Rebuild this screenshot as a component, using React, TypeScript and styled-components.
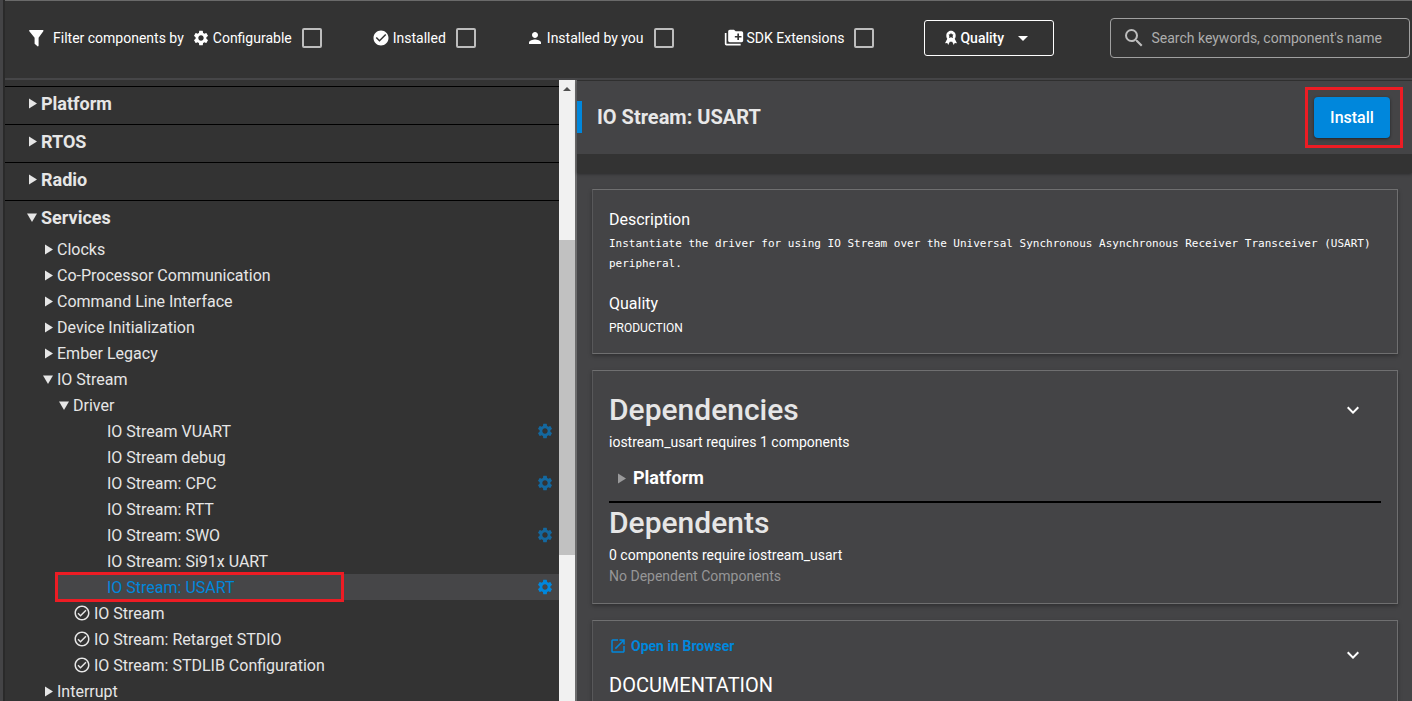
import React from 'react';
import styled, { createGlobalStyle } from 'styled-components';
import {
  MdSettings,
  MdCheckCircle,
  MdPerson,
  MdSearch,
  MdArrowDropDown,
  MdOutlineCheckCircle,
  MdOpenInNew,
  MdExpandMore,
} from 'react-icons/md';

const GlobalStyle = createGlobalStyle`
  * { box-sizing: border-box; }
  body {
    margin: 0;
    background: #333333;
    color: #ffffff;
    font-family: Roboto, sans-serif;
    overflow: hidden;
  }
  h1, h2, h3, p, ul { margin: 0; padding: 0; }
  ul { list-style: none; }
  button, input { font-family: inherit; }
  svg { flex: none; }
`;

const Page = styled.div`
  display: flex;
  flex-direction: column;
  height: 100vh;
  border-left: 3px solid #444446;
  box-shadow: inset 2px 0 0 #2a2a2a;
  padding-left: 2px;
  overflow: hidden;
`;

const Toolbar = styled.header`
  display: flex;
  align-items: center;
  flex: none;
  gap: 50px;
  height: 80px;
  padding: 0 2px 4px 24px;
  border-top: 1px solid #6a6a6a;
  border-bottom: 2px solid #464648;
`;

const FilterGroup = styled.div`
  display: flex;
  align-items: center;
  gap: 8px;
`;

const FilterLabel = styled.span`
  font-size: 14px;
  line-height: 20px;
  white-space: nowrap;
`;

const CheckLabel = styled.label`
  display: flex;
  align-items: center;
  gap: 3px;
  font-size: 14px;
  line-height: 20px;
  white-space: nowrap;
`;

const Checkbox = styled.input`
  appearance: none;
  width: 20px;
  height: 20px;
  margin: 0 0 0 7px;
  border: 2px solid #bdbdbd;
  border-radius: 2px;
`;

const QualityButton = styled.button`
  display: flex;
  align-items: center;
  gap: 3px;
  flex: none;
  width: 130px;
  height: 36px;
  padding: 0 0 0 20px;
  border: 1px solid #ffffff;
  border-radius: 3px;
  background: transparent;
  color: #ffffff;
  font-size: 14px;
  font-weight: 500;
`;

const Caret = styled(MdArrowDropDown)`
  margin-left: 4px;
`;

const SearchField = styled.label`
  display: flex;
  align-items: center;
  flex: 1;
  gap: 5px;
  height: 40px;
  margin-left: 6px;
  padding: 0 11px;
  border: 1px solid #a0a0a0;
  border-radius: 4px;
  color: #bdbdbd;
`;

const SearchInput = styled.input`
  flex: 1;
  min-width: 0;
  padding: 0;
  border: 0;
  outline: 0;
  background: transparent;
  color: #ffffff;
  font-size: 14px;
  &::placeholder { color: #adadad; opacity: 1; }
`;

const Body = styled.main`
  display: flex;
  flex: 1;
  min-height: 0;
`;

const Tree = styled.nav`
  flex: 554 1 0;
  min-width: 0;
  padding-top: 6px;
  overflow: hidden;
  color: #e6e6e6;
`;

const Category = styled.div<{ $open: boolean }>`
  display: flex;
  align-items: center;
  gap: 3px;
  padding: 3px 20px ${(p) => (p.$open ? 6 : 8)}px;
  border-top: 1px solid #000000;
  font-size: 18px;
  font-weight: 700;
`;

const Row = styled.li<{ $indent: number; $selected?: boolean }>`
  position: relative;
  display: flex;
  align-items: center;
  gap: 3px;
  height: 26px;
  margin-left: ${(p) => (p.$selected ? 50 : 0)}px;
  padding: 0 5px 0 ${(p) => (p.$selected ? p.$indent - 50 : p.$indent)}px;
  background: ${(p) => (p.$selected ? '#464648' : 'transparent')};
  color: ${(p) => (p.$selected ? '#0087dc' : 'inherit')};
  font-size: 16px;
`;

const RowLabel = styled.span`
  padding-top: 2px;
  line-height: 24px;
`;

const RowGear = styled(MdSettings)<{ $active?: boolean }>`
  margin-left: auto;
  color: ${(p) => (p.$active ? '#0087dc' : '#14689f')};
`;

const RowHighlight = styled.div`
  position: absolute;
  top: -2px;
  left: 0;
  width: 289px;
  height: 30px;
  border: 3px solid #ed1c24;
`;

const Scrollbar = styled.div`
  display: flex;
  flex-direction: column;
  align-items: center;
  flex: none;
  width: 18px;
  border-right: 2px solid #6c6c6d;
  background: #f1f1f1;
  color: #505050;
`;

const ScrollArrow = styled.div`
  display: flex;
  align-items: center;
  justify-content: center;
  height: 17px;
`;

const ScrollThumb = styled.div`
  width: 100%;
  height: 315px;
  margin-top: 143px;
  background: #c1c1c1;
`;

const Detail = styled.section`
  flex: 835 1 0;
  min-width: 0;
  background: #444446;
  border-top: 1px solid #333333;
`;

const DetailHeader = styled.div`
  display: flex;
  align-items: flex-start;
  height: 92px;
  padding: 16px 22px 0 0;
  border-bottom: 19px solid #333333;
  box-shadow: 0 1px 3px rgba(0, 0, 0, 0.4);
`;

const DetailTitle = styled.h1`
  flex: 1;
  margin-top: 4px;
  padding-left: 15px;
  border-left: 5px solid #0087dc;
  font-size: 20px;
  line-height: 32px;
  font-weight: 700;
  color: #e8e8e8;
`;

const InstallWrap = styled.div`
  position: relative;
`;

const InstallHighlight = styled.div`
  position: absolute;
  inset: -10px -13px -10px -9px;
  border: 3px solid #ed1c24;
  pointer-events: none;
`;

const InstallButton = styled.button`
  display: block;
  width: 76px;
  height: 41px;
  padding: 0;
  border: 0;
  border-radius: 4px;
  background: #0087dc;
  color: #ffffff;
  font-size: 16px;
  font-weight: 500;
  box-shadow: 0 1px 3px rgba(0, 0, 0, 0.5);
`;

const Cards = styled.div`
  display: flex;
  flex-direction: column;
  gap: 16px;
  padding: 16px 14px 0 15px;
`;

const Card = styled.article`
  padding: 16px 16px 15px;
  border: 1px solid #6f6f70;
  border-left-color: #58585a;
  box-shadow: 0 2px 4px rgba(0, 0, 0, 0.3);
`;

const CardSection = styled.div`
  padding: 3px 0;
`;

const FieldTitle = styled.h3`
  font-size: 16px;
  line-height: 28px;
  font-weight: 400;
`;

const Mono = styled.p`
  margin-bottom: 16px;
  font-family: 'DejaVu Sans Mono', monospace;
  font-size: 11px;
  line-height: 20px;
`;

const Production = styled.p`
  font-size: 12px;
  line-height: 20px;
`;

const Heading = styled.h2`
  font-size: 30px;
  line-height: 40px;
  font-weight: 500;
  color: #e6e6e6;
`;

const Note = styled.p<{ $dim?: boolean }>`
  font-size: 14px;
  line-height: ${(p) => (p.$dim ? 18 : 24)}px;
  color: ${(p) => (p.$dim ? '#969697' : '#ffffff')};
`;

const PlatformRow = styled.div`
  display: flex;
  align-items: center;
  gap: 6px;
  height: 49px;
  padding-left: 5px;
  border-bottom: 2px solid #000000;
  font-size: 18px;
  font-weight: 700;
`;

const CardTop = styled.div<{ $align: string }>`
  display: flex;
  align-items: ${(p) => p.$align};
  justify-content: space-between;
  padding-right: 10px;
`;

const Toggle = styled.button`
  display: flex;
  align-items: center;
  justify-content: center;
  width: 36px;
  height: 36px;
  padding: 0;
  border: 0;
  background: transparent;
  color: #ffffff;
`;

const BrowserLink = styled.a`
  display: flex;
  align-items: center;
  gap: 4px;
  color: #0087dc;
  font-size: 14px;
  line-height: 18px;
  font-weight: 700;
  text-decoration: none;
`;

const DocTitle = styled.h2`
  font-size: 20px;
  line-height: 24px;
  font-weight: 400;
`;

const Arrow = ({ open, color = 'currentColor' }: { open?: boolean; color?: string }) => (
  <svg width="13" height="12" viewBox="0 0 13 12" fill={color} aria-hidden="true">
    {open ? <path d="M2 2.500h10l-5 8.500z" /> : <path d="M4 1.500l8 5-8 5z" />}
  </svg>
);

const Funnel = () => (
  <svg width="16" height="18" viewBox="0 0 16 18" fill="#fff" aria-hidden="true">
    <path d="M.8 1h13c.7 0 .9.6.5 1.200L9.600 8.800v7.800c0 .8-.6 1-1.100.600L5.600 14.800v-6L.3 2.200C-.1 1.600.1 1 .8 1z" />
  </svg>
);

const Ribbon = () => (
  <svg width="12" height="16" viewBox="0 0 12 16" fill="#fff" aria-hidden="true">
    <path
      fillRule="evenodd"
      d="M6 .8c1.300 0 2.200.4 3 1.200.9.8 1.700 1.600 1.700 3.400 0 1.500-.4 2.500-1 3.400L12 13.200l-2.300-.1-.9 2-1.600-3.300H4.800l-1.600 3.300-.9-2-2.300.1 2.300-4.400c-.6-.9-1-1.900-1-3.400 0-1.800.8-2.600 1.700-3.400.8-.8 1.700-1.200 3-1.200zM6 3l-.8 1.200-1.600.3.800 1.500-.4 1.900 2-.6 2 .6-.4-1.900.8-1.500-1.600-.3z"
    />
  </svg>
);

const FolderPlus = () => (
  <svg width="20" height="20" viewBox="0 0 24 24" fill="#fff" aria-hidden="true">
    <path d="M3 6H1v13c0 1.100.9 2 2 2h17v-2H3V6z" />
    <path
      fillRule="evenodd"
      d="M21 4h-7l-2-2H7c-1.100 0-2 .9-2 2v11c0 1.100.9 2 2 2h14c1.100 0 2-.9 2-2V6c0-1.100-.9-2-2-2zm0 7.500h-3v3h-2v-3h-3v-2h3v-3h2v3h3z"
    />
  </svg>
);

type Item = {
  label: string;
  indent: number;
  kind: 'closed' | 'open' | 'leaf' | 'installed';
  gear?: boolean;
  selected?: boolean;
};

const items: Item[] = [
  { label: 'Clocks', indent: 36, kind: 'closed' },
  { label: 'Co-Processor Communication', indent: 36, kind: 'closed' },
  { label: 'Command Line Interface', indent: 36, kind: 'closed' },
  { label: 'Device Initialization', indent: 36, kind: 'closed' },
  { label: 'Ember Legacy', indent: 36, kind: 'closed' },
  { label: 'IO Stream', indent: 36, kind: 'open' },
  { label: 'Driver', indent: 52, kind: 'open' },
  { label: 'IO Stream VUART', indent: 102, kind: 'leaf', gear: true },
  { label: 'IO Stream debug', indent: 102, kind: 'leaf' },
  { label: 'IO Stream: CPC', indent: 102, kind: 'leaf', gear: true },
  { label: 'IO Stream: RTT', indent: 102, kind: 'leaf' },
  { label: 'IO Stream: SWO', indent: 102, kind: 'leaf', gear: true },
  { label: 'IO Stream: Si91x UART', indent: 102, kind: 'leaf' },
  { label: 'IO Stream: USART', indent: 102, kind: 'leaf', gear: true, selected: true },
  { label: 'IO Stream', indent: 68, kind: 'installed' },
  { label: 'IO Stream: Retarget STDIO', indent: 68, kind: 'installed' },
  { label: 'IO Stream: STDLIB Configuration', indent: 68, kind: 'installed' },
  { label: 'Interrupt', indent: 36, kind: 'closed' },
];

export default function App() {
  return (
    <Page>
      <GlobalStyle />
      <Toolbar>
        <FilterGroup>
          <Funnel />
          <FilterLabel>Filter components by</FilterLabel>
          <CheckLabel>
            <MdSettings size={18} />
            Configurable
            <Checkbox type="checkbox" />
          </CheckLabel>
        </FilterGroup>
        <CheckLabel>
          <MdCheckCircle size={18} />
          Installed
          <Checkbox type="checkbox" />
        </CheckLabel>
        <CheckLabel>
          <MdPerson size={18} />
          Installed by you
          <Checkbox type="checkbox" />
        </CheckLabel>
        <CheckLabel>
          <FolderPlus />
          SDK Extensions
          <Checkbox type="checkbox" />
        </CheckLabel>
        <QualityButton type="button">
          <Ribbon />
          Quality
          <Caret size={24} />
        </QualityButton>
        <SearchField>
          <MdSearch size={24} />
          <SearchInput type="text" aria-label="Search" placeholder="Search keywords, component's name" />
        </SearchField>
      </Toolbar>
      <Body>
        <Tree>
          {['Platform', 'RTOS', 'Radio', 'Services'].map((name) => (
            <Category key={name} $open={name === 'Services'}>
              <Arrow open={name === 'Services'} />
              <RowLabel>{name}</RowLabel>
            </Category>
          ))}
          <ul>
            {items.map((item, i) => (
              <Row key={i} $indent={item.indent} $selected={item.selected}>
                {(item.kind === 'closed' || item.kind === 'open') && <Arrow open={item.kind === 'open'} />}
                {item.kind === 'installed' && <MdOutlineCheckCircle size={18} />}
                <RowLabel>{item.label}</RowLabel>
                {item.gear && <RowGear size={18} $active={item.selected} />}
                {item.selected && <RowHighlight />}
              </Row>
            ))}
          </ul>
        </Tree>
        <Scrollbar>
          <ScrollArrow>
            <svg width="8" height="4" viewBox="0 0 8 4" fill="currentColor" aria-hidden="true">
              <path d="M4 0l4 4H0z" />
            </svg>
          </ScrollArrow>
          <ScrollThumb />
        </Scrollbar>
        <Detail>
          <DetailHeader>
            <DetailTitle>IO Stream: USART</DetailTitle>
            <InstallWrap>
              <InstallButton type="button">Install</InstallButton>
              <InstallHighlight />
            </InstallWrap>
          </DetailHeader>
          <Cards>
            <Card>
              <FieldTitle>Description</FieldTitle>
              <Mono>
                Instantiate the driver for using IO Stream over the Universal Synchronous Asynchronous Receiver
                Transceiver (USART) peripheral.
              </Mono>
              <FieldTitle>Quality</FieldTitle>
              <Production>PRODUCTION</Production>
            </Card>
            <Card>
              <CardSection>
                <CardTop $align="center">
                  <Heading>Dependencies</Heading>
                  <Toggle type="button" aria-label="Collapse dependencies">
                    <MdExpandMore size={24} />
                  </Toggle>
                </CardTop>
                <Note>iostream_usart requires 1 components</Note>
                <PlatformRow>
                  <Arrow color="#9a9a9b" />
                  Platform
                </PlatformRow>
                <Heading>Dependents</Heading>
                <Note>0 components require iostream_usart</Note>
                <Note $dim>No Dependent Components</Note>
              </CardSection>
            </Card>
            <Card>
              <CardTop $align="flex-start">
                <BrowserLink href="#docs">
                  <MdOpenInNew size={18} />
                  Open in Browser
                </BrowserLink>
                <Toggle type="button" aria-label="Collapse documentation">
                  <MdExpandMore size={24} />
                </Toggle>
              </CardTop>
              <DocTitle>DOCUMENTATION</DocTitle>
            </Card>
          </Cards>
        </Detail>
      </Body>
    </Page>
  );
}
